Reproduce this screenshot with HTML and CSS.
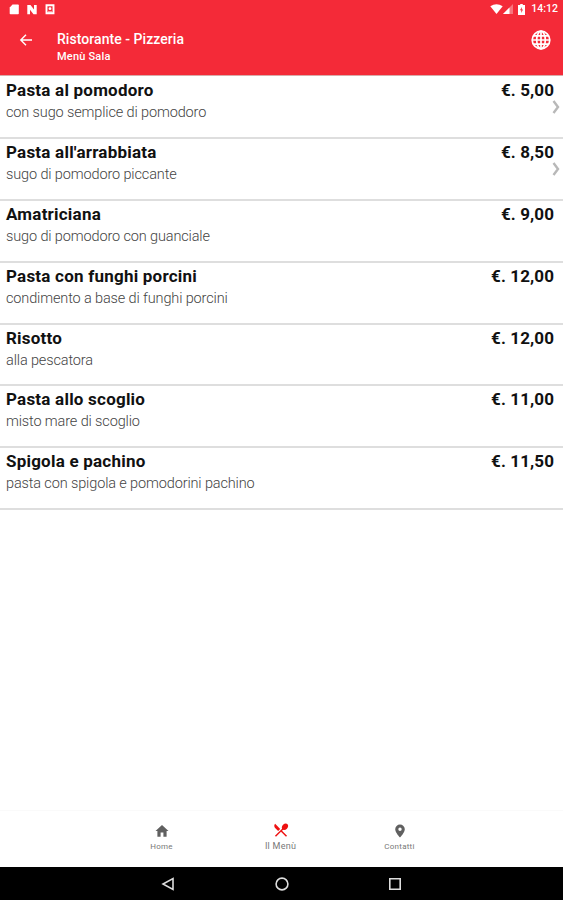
FILE: index.html
```html
<!DOCTYPE html>
<html lang="it">
<head>
    <meta charset="UTF-8">
    <meta name="viewport" content="width=device-width, initial-scale=1.0">
    <title>Ristorante - Pizzeria</title>
    <link rel="stylesheet" href="styles.css">
</head>
<body>
    <header class="header">
        <div class="status-bar">
            <div class="status-left">
                <svg width="10" height="11" viewBox="0 0 10 11"><path d="M3.500 0.500H9a.8.8 0 0 1 .8.8V9.500a.8.8 0 0 1-.8.8H1.500a.8.8 0 0 1-.8-.8V3.500z" fill="#fff"/></svg>
                <svg width="10" height="11" viewBox="0 0 10 11"><path d="M0.300 1h3.200L7 5.500V1h2.700v9.200H6.500L3 5.800v4.400H.3z" fill="#fff"/></svg>
                <svg width="10" height="11" viewBox="0 0 10 11"><path d="M1.500 1.200h7v8.100h-7z" fill="none" stroke="#fff" stroke-width="1.900"/><circle cx="5" cy="4.700" r="1.400" fill="#fff"/><path d="M3 8h4" stroke="#fff"/></svg>
            </div>
            <div class="status-right">
                <svg width="13" height="10" viewBox="0 0 13 10"><path d="M.3 2.300Q6.500-1.900 12.700 2.300L6.500 10z" fill="#fff"/></svg>
                <svg width="10" height="10" viewBox="0 0 10 10"><path d="M0 10L10 0V10z" fill="#fff" opacity=".35"/><path d="M0 10L6.500 3.500V10z" fill="#fff"/></svg>
                <svg class="battery" width="7" height="11" viewBox="0 0 7 11"><path d="M2.200 0h2.600v1H7v10H0V1h2.200z" fill="#fff"/><path d="M3.800 3L2 6.300h1.300V9L5 5.500H3.800z" fill="#f42a38"/></svg>
                <span class="clock">14:12</span>
            </div>
        </div>
        <div class="toolbar">
            <svg class="back" width="14" height="14" viewBox="0 0 14 14"><path d="M13 7H2M7 1.800L1.800 7L7 12.200" fill="none" stroke="#fff" stroke-width="1.400"/></svg>
            <div class="titles">
                <h1>Ristorante - Pizzeria</h1>
                <p>Menù Sala</p>
            </div>
            <svg class="globe" width="20" height="20" viewBox="0 0 20 20" fill="none" stroke="#fff" stroke-width="1.700"><circle cx="10" cy="10" r="8.800"/><ellipse cx="10" cy="10" rx="4.300" ry="8.800"/><path d="M10 1v18M1 10h18M2.300 5.800h15.400M2.300 14.200h15.400"/></svg>
        </div>
    </header>

    <main class="menu">
        <div class="item">
            <div class="row"><h2>Pasta al pomodoro</h2><span class="price">€. 5,00</span></div>
            <div class="row"><p>con sugo semplice di pomodoro</p><svg class="chevron" width="8" height="14" viewBox="0 0 8 14"><path d="M1.500 1L6 7L1.500 13"/></svg></div>
        </div>
        <div class="item">
            <div class="row"><h2>Pasta all'arrabbiata</h2><span class="price">€. 8,50</span></div>
            <div class="row"><p>sugo di pomodoro piccante</p><svg class="chevron" width="8" height="14" viewBox="0 0 8 14"><path d="M1.500 1L6 7L1.500 13"/></svg></div>
        </div>
        <div class="item">
            <div class="row"><h2>Amatriciana</h2><span class="price">€. 9,00</span></div>
            <div class="row"><p>sugo di pomodoro con guanciale</p></div>
        </div>
        <div class="item">
            <div class="row"><h2>Pasta con funghi porcini</h2><span class="price">€. 12,00</span></div>
            <div class="row"><p>condimento a base di funghi porcini</p></div>
        </div>
        <div class="item">
            <div class="row"><h2>Risotto</h2><span class="price">€. 12,00</span></div>
            <div class="row"><p>alla pescatora</p></div>
        </div>
        <div class="item">
            <div class="row"><h2>Pasta allo scoglio</h2><span class="price">€. 11,00</span></div>
            <div class="row"><p>misto mare di scoglio</p></div>
        </div>
        <div class="item">
            <div class="row"><h2>Spigola e pachino</h2><span class="price">€. 11,50</span></div>
            <div class="row"><p>pasta con spigola e pomodorini pachino</p></div>
        </div>
    </main>

    <nav class="tabs">
        <a class="tab">
            <svg width="14" height="14" viewBox="0 0 14 14"><path d="M7 1l6.500 6H11.600v5.700H8.400V8.500H5.600v4.200H2.400V7H.5z" fill="#606060"/></svg>
            <span>Home</span>
        </a>
        <a class="tab active">
            <svg width="16" height="16" viewBox="1 1 22 22"><path d="M8.100 13.340l2.830-2.830L3.910 3.500c-1.560 1.560-1.560 4.090 0 5.660l4.190 4.180zm6.780-1.810c1.530.71 3.680.21 5.270-1.380 1.910-1.910 2.280-4.650.81-6.120-1.460-1.460-4.200-1.100-6.120.81-1.590 1.590-2.090 3.740-1.380 5.270L3.700 19.870l1.410 1.410L12 14.410l6.880 6.880 1.410-1.410L13.410 13l1.470-1.470z" fill="#ee1111"/></svg>
            <span>Il Menù</span>
        </a>
        <a class="tab">
            <svg width="14" height="14" viewBox="0 0 14 14"><path fill-rule="evenodd" d="M7 .5a4.800 4.800 0 0 0-4.800 4.800C2.200 8.700 7 13.500 7 13.500s4.800-4.800 4.800-8.200A4.800 4.800 0 0 0 7 .5zm0 3a1.700 1.700 0 1 1 0 3.400 1.700 1.700 0 0 1 0-3.400z" fill="#606060"/></svg>
            <span>Contatti</span>
        </a>
    </nav>

    <div class="system-nav">
        <svg width="14" height="14" viewBox="0 0 14 14"><path d="M12 1.500v11L2 7z"/></svg>
        <svg width="14" height="14" viewBox="0 0 14 14"><circle cx="7" cy="7" r="5.900"/></svg>
        <svg width="14" height="14" viewBox="0 0 14 14"><path d="M1.800 1.800h10.400v10.400H1.800z"/></svg>
    </div>
</body>
</html>
```
FILE: styles.css
```css
* {
    box-sizing: border-box;
}
body {
    margin: 0;
    height: 100vh;
    display: flex;
    flex-direction: column;
    font-family: Roboto, Arial, sans-serif;
    background-color: #fff;
    overflow: hidden;
}
h1, h2, p {
    margin: 0;
}
svg {
    display: block;
    flex: none;
}
.header {
    height: 76px;
    background-color: #f42a38;
    border-bottom: 1px solid #d9aaa9;
    color: #fff;
}
.status-bar {
    height: 18px;
    padding: 0 5px 0 9px;
    display: flex;
    justify-content: space-between;
    align-items: center;
}
.status-left {
    display: flex;
    gap: 8px;
}
.status-right {
    display: flex;
    align-items: center;
}
.battery {
    margin: 0 6px 0 5px;
}
.clock {
    font-size: 10.5px;
    font-weight: 500;
    line-height: 18px;
}
.toolbar {
    height: 57px;
    padding: 0 12px 0 19px;
    display: flex;
    align-items: flex-start;
}
.back {
    margin-top: 15px;
}
.titles {
    flex: 1;
    padding: 13px 0 0 24px;
}
.titles h1 {
    font-size: 14px;
    font-weight: 500;
    line-height: 17px;
    letter-spacing: 0.05px;
}
.titles p {
    font-size: 11px;
    font-weight: 500;
    line-height: 17px;
    letter-spacing: 0.2px;
}
.globe {
    margin-top: 12px;
}
.menu {
    flex: 1;
    padding-top: 1px;
}
.item {
    height: 61.9px;
    padding: 3px 3px 0 6px;
    border-bottom: 2px solid #dedede;
}
.row {
    display: flex;
    justify-content: space-between;
    height: 22px;
    line-height: 22px;
}
.row h2, .price {
    font-size: 17px;
    font-weight: 700;
    line-height: 21px;
    letter-spacing: 0.22px;
    color: #111;
}
.price {
    margin-right: 6px;
    letter-spacing: 0.1px;
}
.row p {
    font-size: 14.5px;
    font-weight: 300;
    letter-spacing: -0.13px;
    color: #444;
}
.chevron {
    margin-top: -2px;
    fill: none;
    stroke: #b8b8b8;
    stroke-width: 2.4;
}
.tabs {
    height: 57px;
    padding: 0 104px 0 102px;
    display: flex;
    border-top: 1px solid #fafafa;
}
.tab {
    flex: 1;
    padding-top: 13px;
    display: flex;
    flex-direction: column;
    align-items: center;
    font-size: 8px;
    line-height: 10px;
    letter-spacing: 0.25px;
    color: #777;
}
.tab span {
    margin-top: 4px;
}
.tab.active {
    padding-top: 11px;
    font-size: 9px;
}
.tab.active span {
    margin-top: 3px;
}
.system-nav {
    height: 33px;
    padding: 0 161px;
    display: flex;
    justify-content: space-between;
    align-items: center;
    background-color: #000;
}
.system-nav svg {
    fill: none;
    stroke: #ddd;
    stroke-width: 1.6;
}
```
